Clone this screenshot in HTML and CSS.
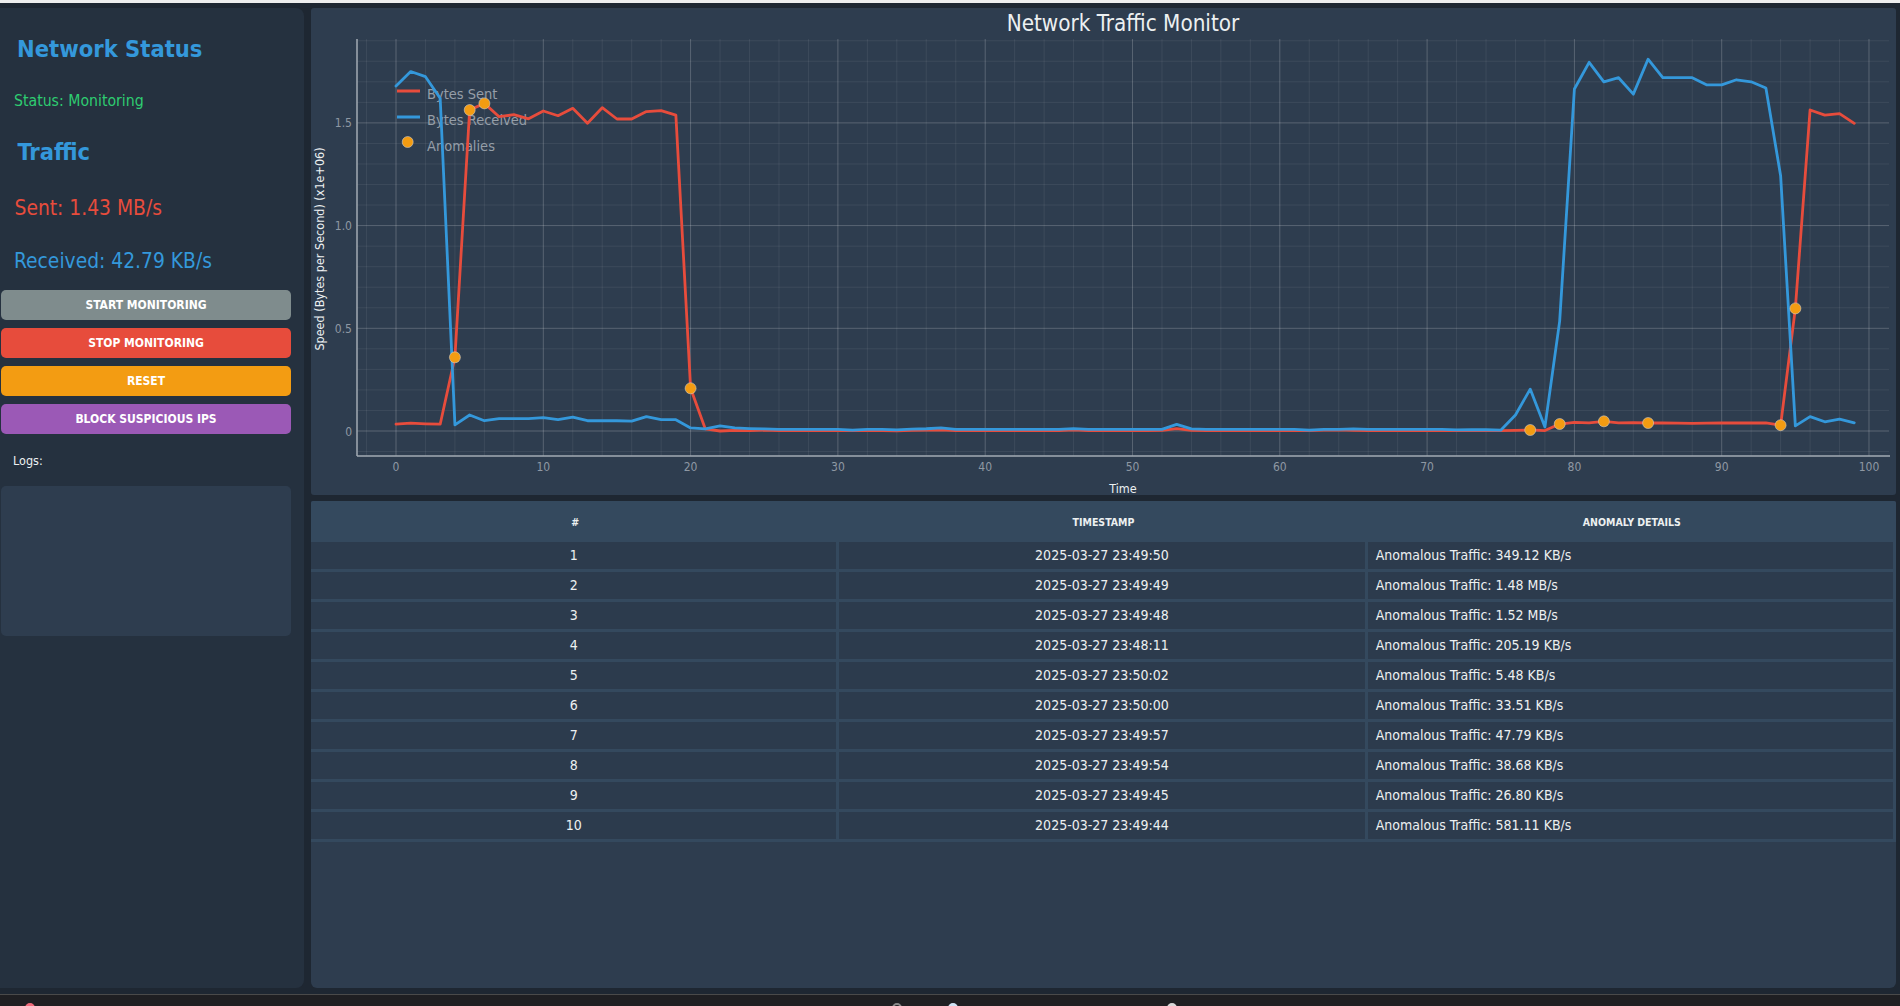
FILE: index.html
```html
<!DOCTYPE html>
<html lang="en">
<head>
<meta charset="utf-8">
<title>Network Traffic Monitor</title>
<link rel="stylesheet" href="styles.css">
</head>
<body>
<div class="window-edge"></div>
<div class="app">
  <aside class="sidebar">
    <h1 class="sb-heading">Network Status</h1>
    <div class="status">Status: Monitoring</div>
    <h2 class="sb-heading traffic">Traffic</h2>
    <div class="rate sent">Sent: 1.43 MB/s</div>
    <div class="rate received">Received: 42.79 KB/s</div>
    <div class="actions">
      <button class="btn btn-start">START MONITORING</button>
      <button class="btn btn-stop">STOP MONITORING</button>
      <button class="btn btn-reset">RESET</button>
      <button class="btn btn-block">BLOCK SUSPICIOUS IPS</button>
    </div>
    <div class="logs-label">Logs:</div>
    <div class="logs-box"></div>
  </aside>

  <main class="main">
    <section class="chart-panel">
      <div class="chart-title">Network Traffic Monitor</div>
      <svg class="chart" width="1585" height="456" viewBox="311 39 1585 456" xmlns="http://www.w3.org/2000/svg">
        <g class="plot" transform="translate(396 431) scale(14.73 -205.4)">
          <path class="grid-minor" vector-effect="non-scaling-stroke" d="M-2-0.1217v2.0302m2-2.0302v2.0302m2-2.0302v2.0302m2-2.0302v2.0302m2-2.0302v2.0302m2-2.0302v2.0302m2-2.0302v2.0302m2-2.0302v2.0302m2-2.0302v2.0302m2-2.0302v2.0302m2-2.0302v2.0302m2-2.0302v2.0302m2-2.0302v2.0302m2-2.0302v2.0302m2-2.0302v2.0302m2-2.0302v2.0302m2-2.0302v2.0302m2-2.0302v2.0302m2-2.0302v2.0302m2-2.0302v2.0302m2-2.0302v2.0302m2-2.0302v2.0302m2-2.0302v2.0302m2-2.0302v2.0302m2-2.0302v2.0302m2-2.0302v2.0302m2-2.0302v2.0302m2-2.0302v2.0302m2-2.0302v2.0302m2-2.0302v2.0302m2-2.0302v2.0302m2-2.0302v2.0302m2-2.0302v2.0302m2-2.0302v2.0302m2-2.0302v2.0302m2-2.0302v2.0302m2-2.0302v2.0302m2-2.0302v2.0302m2-2.0302v2.0302m2-2.0302v2.0302m2-2.0302v2.0302m2-2.0302v2.0302m2-2.0302v2.0302m2-2.0302v2.0302m2-2.0302v2.0302m2-2.0302v2.0302m2-2.0302v2.0302m2-2.0302v2.0302m2-2.0302v2.0302m2-2.0302v2.0302m2-2.0302v2.0302m2-2.0302v2.0302"/>
          <path class="grid-minor" vector-effect="non-scaling-stroke" d="M-2.648-0.1h104.01m-104.01 0.1h104.01m-104.01 0.1h104.01m-104.01 0.1h104.01m-104.01 0.1h104.01m-104.01 0.1h104.01m-104.01 0.1h104.01m-104.01 0.1h104.01m-104.01 0.1h104.01m-104.01 0.1h104.01m-104.01 0.1h104.01m-104.01 0.1h104.01m-104.01 0.1h104.01m-104.01 0.1h104.01m-104.01 0.1h104.01m-104.01 0.1h104.01m-104.01 0.1h104.01m-104.01 0.1h104.01m-104.01 0.1h104.01m-104.01 0.1h104.01m-104.01 0.1h104.01"/>
          <path class="grid-major" vector-effect="non-scaling-stroke" d="M0-0.1217v2.0302m10-2.0302v2.0302m10-2.0302v2.0302m10-2.0302v2.0302m10-2.0302v2.0302m10-2.0302v2.0302m10-2.0302v2.0302m10-2.0302v2.0302m10-2.0302v2.0302m10-2.0302v2.0302m10-2.0302v2.0302"/>
          <path class="grid-major" vector-effect="non-scaling-stroke" d="M-2.648 0h104.01m-104.01 0.5h104.01m-104.01 0.5h104.01m-104.01 0.5h104.01"/>
        </g>

        <line class="axis" x1="357" y1="39" x2="357" y2="456"/>
        <line class="axis" x1="357" y1="456" x2="1890" y2="456"/>

        <g class="legend">
          <line class="legend-sent" x1="397" y1="91" x2="420" y2="91"/>
          <text x="427" y="99">Bytes Sent</text>
          <line class="legend-recv" x1="397" y1="117" x2="420" y2="117"/>
          <text x="427" y="125">Bytes Received</text>
          <circle class="dot" cx="407.7" cy="142" r="5.5"/>
          <text x="427" y="151">Anomalies</text>
        </g>

        <g transform="translate(396 431) scale(14.73 -205.4)">
          <path class="series-sent" vector-effect="non-scaling-stroke" d="M0 .033L1 .038 2 .035 3 .033 4 .359 5 1.563 6 1.595 7 1.53 8 1.54 9 1.52 10 1.558 11 1.535 12 1.571 13 1.498 14 1.574 15 1.519 16 1.519 17 1.555 18 1.56 19 1.538 20 .208 21 .01 22 0 23 .003 24 .002 25 .004 26 .002 27 .002 28 .003 29 .002 30 .002 31 .003 32 .002 33 .002 34 .001 35 .003 36 .004 37 .006 38 .002 39 .002 40 .002 41 .003 42 .002 43 .002 44 .003 45 .002 46 .005 47 .002 48 .002 49 .002 50 .002 51 .002 52 .003 53 .012 54 .003 55 .002 56 .002 57 .002 58 .002 59 .002 60 .002 61 .003 62 .002 63 .004 64 .005 65 .003 66 .002 67 .002 68 .003 69 .002 70 .002 71 .002 72 .002 73 .002 74 .003 75 .002 76 .003 77 .005 78 .002 79 .034 80 .042 81 .04 82 .047 83 .04 84 .041 85 .039 86 .04 87 .038 88 .037 89 .038 90 .039 91 .04 92 .039 93 .04 94 .028 95 .597 96 1.563 97 1.538 98 1.545 99 1.498"/>
          <path class="series-recv" vector-effect="non-scaling-stroke" d="M0 1.68L1 1.75 2 1.725 3 1.62 4 .03 5 .078 6 .05 7 .06 8 .06 9 .06 10 .065 11 .055 12 .068 13 .05 14 .05 15 .05 16 .048 17 .07 18 .055 19 .055 20 .015 21 .01 22 .025 23 .015 24 .012 25 .01 26 .008 27 .008 28 .008 29 .008 30 .008 31 .004 32 .008 33 .008 34 .005 35 .009 36 .011 37 .015 38 .008 39 .008 40 .008 41 .008 42 .008 43 .008 44 .008 45 .008 46 .012 47 .008 48 .008 49 .008 50 .008 51 .008 52 .008 53 .032 54 .01 55 .008 56 .008 57 .008 58 .008 59 .008 60 .008 61 .008 62 .004 63 .008 64 .008 65 .01 66 .008 67 .008 68 .008 69 .008 70 .008 71 .008 72 .005 73 .006 74 .006 75 .004 76 .078 77 .204 78 .02 79 .535 80 1.665 81 1.795 82 1.7 83 1.72 84 1.64 85 1.81 86 1.72 87 1.72 88 1.72 89 1.685 90 1.685 91 1.71 92 1.7 93 1.67 94 1.243 95 .025 96 .07 97 .045 98 .058 99 .04"/>
        </g>

        <g class="anomalies">
          <circle class="dot" cx="454.9" cy="357.3" r="5.5"/>
          <circle class="dot" cx="469.7" cy="110" r="5.5"/>
          <circle class="dot" cx="484.4" cy="103.4" r="5.5"/>
          <circle class="dot" cx="690.6" cy="388.3" r="5.5"/>
          <circle class="dot" cx="1530.2" cy="430" r="5.5"/>
          <circle class="dot" cx="1559.7" cy="424" r="5.5"/>
          <circle class="dot" cx="1603.9" cy="421.3" r="5.5"/>
          <circle class="dot" cx="1648.1" cy="423" r="5.5"/>
          <circle class="dot" cx="1780.6" cy="425.2" r="5.5"/>
          <circle class="dot" cx="1795.4" cy="308.4" r="5.5"/>
        </g>

        <g class="ticks-x">
          <text x="396" y="471">0</text>
          <text x="543.3" y="471">10</text>
          <text x="690.6" y="471">20</text>
          <text x="837.9" y="471">30</text>
          <text x="985.2" y="471">40</text>
          <text x="1132.5" y="471">50</text>
          <text x="1279.8" y="471">60</text>
          <text x="1427.1" y="471">70</text>
          <text x="1574.4" y="471">80</text>
          <text x="1721.7" y="471">90</text>
          <text x="1869" y="471">100</text>
        </g>
        <g class="ticks-y">
          <text x="352" y="436">0</text>
          <text x="352" y="333">0.5</text>
          <text x="352" y="230">1.0</text>
          <text x="352" y="127">1.5</text>
        </g>
        <text class="axis-label" transform="translate(324 249) rotate(-90)">Speed (Bytes per Second) (x1e+06)</text>
        <text class="axis-label" x="1123" y="493">Time</text>
      </svg>
    </section>

    <section class="table-panel">
      <table class="anomaly-table">
        <thead>
          <tr><th>#</th><th>TIMESTAMP</th><th>ANOMALY DETAILS</th></tr>
        </thead>
        <tbody>
          <tr><td>1</td><td>2025-03-27 23:49:50</td><td class="detail">Anomalous Traffic: 349.12 KB/s</td></tr>
          <tr><td>2</td><td>2025-03-27 23:49:49</td><td class="detail">Anomalous Traffic: 1.48 MB/s</td></tr>
          <tr><td>3</td><td>2025-03-27 23:49:48</td><td class="detail">Anomalous Traffic: 1.52 MB/s</td></tr>
          <tr><td>4</td><td>2025-03-27 23:48:11</td><td class="detail">Anomalous Traffic: 205.19 KB/s</td></tr>
          <tr><td>5</td><td>2025-03-27 23:50:02</td><td class="detail">Anomalous Traffic: 5.48 KB/s</td></tr>
          <tr><td>6</td><td>2025-03-27 23:50:00</td><td class="detail">Anomalous Traffic: 33.51 KB/s</td></tr>
          <tr><td>7</td><td>2025-03-27 23:49:57</td><td class="detail">Anomalous Traffic: 47.79 KB/s</td></tr>
          <tr><td>8</td><td>2025-03-27 23:49:54</td><td class="detail">Anomalous Traffic: 38.68 KB/s</td></tr>
          <tr><td>9</td><td>2025-03-27 23:49:45</td><td class="detail">Anomalous Traffic: 26.80 KB/s</td></tr>
          <tr><td>10</td><td>2025-03-27 23:49:44</td><td class="detail">Anomalous Traffic: 581.11 KB/s</td></tr>
        </tbody>
      </table>
    </section>
  </main>
</div>
<footer class="taskbar">
  <span class="tb-icon tb-red"></span>
  <span class="tb-icon tb-gray"></span>
  <span class="tb-icon tb-blue"></span>
  <span class="tb-icon tb-white"></span>
</footer>
</body>
</html>
```

FILE: styles.css
```css
* { box-sizing: border-box; }

html, body {
  margin: 0;
  padding: 0;
}

body {
  width: 1900px;
  height: 1006px;
  overflow: hidden;
  background: #1e2732;
  color: #ecf0f1;
  font-family: "DejaVu Sans Condensed", "DejaVu Sans", sans-serif;
}

.window-edge {
  height: 3px;
  background: #eeeeee;
}

.app {
  display: flex;
  gap: 7px;
  height: 991px;
  padding: 5px 4px 6px 0;
}

/* ---------- sidebar ---------- */
.sidebar {
  flex: none;
  width: 304px;
  background: #25313f;
  border-radius: 0 8px 8px 0;
  display: flex;
  flex-direction: column;
  padding: 0 13px 0 1px;
}

.sb-heading {
  margin: 21px 0 0;
  padding-left: 16px;
  font-size: 23.5px;
  line-height: 40px;
  font-weight: bold;
  color: #3498db;
}

.sb-heading.traffic { padding-left: 16.5px; margin-top: 19px; }

.status {
  margin-top: 20px;
  padding-left: 13px;
  font-size: 15.7px;
  line-height: 24px;
  color: #2ecc71;
}

.rate {
  padding-left: 13.5px;
  font-size: 20.8px;
  line-height: 32px;
}

.rate.sent { margin-top: 20px; color: #e74c3c; }
.rate.received { margin-top: 21px; color: #3498db; padding-left: 13px; }

.actions {
  display: flex;
  flex-direction: column;
  gap: 8px;
  margin-top: 13px;
}

.btn {
  height: 30px;
  border: 0;
  border-radius: 5px;
  color: #ffffff;
  font-family: "DejaVu Sans Condensed", "DejaVu Sans", sans-serif;
  font-size: 12px;
  font-weight: bold;
  padding: 0;
}

.btn-start { background: #7f8c8d; }
.btn-stop { background: #e74c3c; }
.btn-reset { background: #f39c12; }
.btn-block { background: #9b59b6; }

.logs-label {
  margin-top: 17px;
  padding-left: 12px;
  font-size: 12.5px;
  line-height: 20px;
  color: #ecf0f1;
}

.logs-box {
  margin-top: 15px;
  height: 150px;
  background: #2e3d4f;
  border-radius: 5px;
}

/* ---------- main ---------- */
.main {
  flex: 1;
  min-width: 0;
  display: flex;
  flex-direction: column;
  gap: 6px;
}

.chart-panel {
  height: 487px;
  background: #2e3d4f;
  border-radius: 3px;
  display: flex;
  flex-direction: column;
  overflow: hidden;
}

.chart-title {
  height: 31px;
  line-height: 31px;
  padding: 0 7px 0 46px;
  text-align: center;
  font-size: 22.3px;
  color: #ecf0f1;
}

.chart {
  display: block;
  flex: none;
}

.grid-minor {
  fill: none;
  stroke: rgba(255, 255, 255, 0.07);
  stroke-width: 1;
}

.grid-major {
  fill: none;
  stroke: rgba(255, 255, 255, 0.15);
  stroke-width: 1;
}

.axis {
  stroke: #a3abb3;
  stroke-width: 1.5;
}

.series-sent,
.series-recv {
  fill: none;
  stroke-width: 2.8;
  stroke-linejoin: round;
  stroke-linecap: round;
}

.series-sent { stroke: #e74c3c; }
.series-recv { stroke: #3498db; }

.legend-sent { stroke: #e74c3c; stroke-width: 3; }
.legend-recv { stroke: #3498db; stroke-width: 3; }

.legend text {
  font-family: "DejaVu Sans Condensed", "DejaVu Sans", sans-serif;
  font-size: 14.5px;
  fill: #959ea8;
}

.dot {
  fill: #f39c12;
  stroke: rgba(210, 210, 210, 0.55);
  stroke-width: 1;
}

.ticks-x text,
.ticks-y text {
  font-family: "DejaVu Sans Condensed", "DejaVu Sans", sans-serif;
  font-size: 12px;
  fill: #8e98a3;
}

.ticks-x text { text-anchor: middle; }
.ticks-y text { text-anchor: end; }

.axis-label {
  font-family: "DejaVu Sans Condensed", "DejaVu Sans", sans-serif;
  font-size: 12.5px;
  fill: #ecf0f1;
  text-anchor: middle;
}

/* ---------- table ---------- */
.table-panel {
  height: 487px;
  background: #2e3d4f;
  border-radius: 2px 2px 6px 6px;
  overflow: hidden;
}

.anomaly-table {
  width: 100%;
  table-layout: fixed;
  border-collapse: separate;
  border-spacing: 0;
  font-size: 14px;
  color: #ecf0f1;
}

.anomaly-table th {
  height: 41px;
  padding: 0;
  background: #34495e;
  font-size: 10.5px;
  font-weight: bold;
  text-align: center;
  color: #ecf0f1;
}

.anomaly-table td {
  height: 30px;
  padding: 0 0 1px;
  background: #2c3b4d;
  border-right: 3px solid #34495e;
  border-bottom: 3px solid #34495e;
  text-align: center;
  white-space: nowrap;
}

.anomaly-table td.detail {
  text-align: left;
  padding-left: 8px;
}

/* ---------- taskbar ---------- */
.taskbar {
  height: 12px;
  border-top: 1px solid #4a4a4a;
  background: #1f1f22;
  display: flex;
  align-items: flex-start;
  padding-top: 8px;
  overflow: hidden;
}

.tb-icon {
  flex: none;
  width: 10px;
  height: 10px;
  border-radius: 50%;
}

.tb-red { margin-left: 25px; background: #f06a7a; }
.tb-gray { margin-left: 857px; background: transparent; border: 2px solid #8a8a8a; }
.tb-blue { margin-left: 46px; background: #cfe3f5; }
.tb-white { margin-left: 209px; background: #d8d8d8; }
```
